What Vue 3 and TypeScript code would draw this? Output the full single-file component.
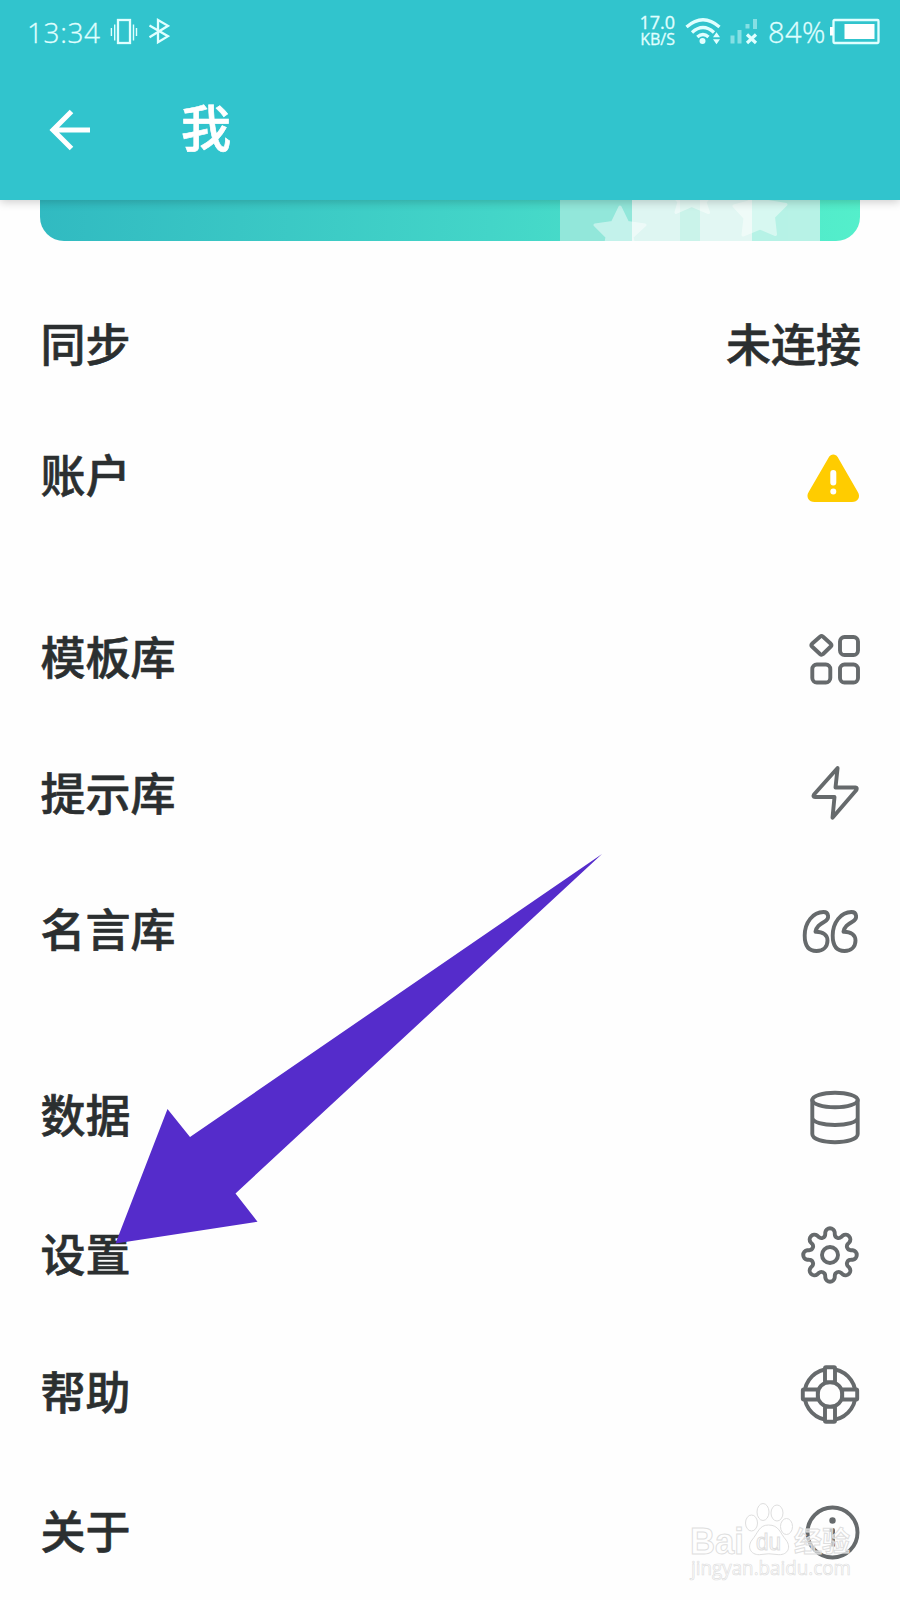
<script setup lang="ts">
type IconName = 'warning' | 'templates' | 'bolt' | 'quote' | 'database' | 'gear' | 'help' | 'info'

interface Item {
  label: string
  icon?: IconName
  value?: string
}

const groups: { id: string; items: Item[] }[] = [
  { id: 'account', items: [{ label: '同步', value: '未连接' }, { label: '账户', icon: 'warning' }] },
  {
    id: 'library',
    items: [
      { label: '模板库', icon: 'templates' },
      { label: '提示库', icon: 'bolt' },
      { label: '名言库', icon: 'quote' },
    ],
  },
  {
    id: 'system',
    items: [
      { label: '数据', icon: 'database' },
      { label: '设置', icon: 'gear' },
      { label: '帮助', icon: 'help' },
      { label: '关于', icon: 'info' },
    ],
  },
]

// Eight-toothed outline: rounded teeth alternating with rounded valleys.
const gearPath = (() => {
  const cx = 50
  const cy = 51
  const pt = (r: number, deg: number) => {
    const a = (deg * Math.PI) / 180
    return `${(cx + r * Math.cos(a)).toFixed(2)} ${(cy + r * Math.sin(a)).toFixed(2)}`
  }
  let d = ''
  for (let i = 0; i < 8; i++) {
    const a = i * 45 - 90
    d += `${i ? 'L' : 'M'}${pt(21.3, a - 13)}`
    d += `L${pt(23.2, a - 11.7)}A4.750 4.750 0 0 1 ${pt(23.2, a + 11.7)}`
    d += `L${pt(21.3, a + 13)}A3.800 3.800 0 0 0 ${pt(21.3, a + 32)}`
  }
  return d + 'Z'
})()
</script>

<template>
  <main class="screen">
    <header class="header">
      <div class="status">
        <div class="status-left">
          <span class="clock">13:34</span>
          <svg class="vibrate" width="28" height="28" viewBox="0 0 28 28">
            <rect x="8" y="3" width="12" height="23" />
            <path d="M4.7 7.5v16M1.4 11v8M23.500 7.500v16M26.500 11v8" class="thin" />
          </svg>
          <svg class="bluetooth" width="22" height="28" viewBox="0 0 22 28">
            <path d="M1.5 8.5 20 19.2 10 25.2V3L20 8.8 1.5 20.2" />
          </svg>
        </div>
        <div class="status-right">
          <div class="speed"><span>17.0</span><span class="unit">KB/S</span></div>
          <svg class="wifi" width="36" height="28" viewBox="0 0 36 28">
            <path d="M1.5 10Q18 -4.5 34.5 10M7 15.500Q18 5.500 29 15.500M12.300 20Q18 15 23.500 20" />
            <circle cx="17.500" cy="24" r="3" />
            <path class="solid" d="M28 20.200 31.500 15.200 35 20.200ZM28 22.200H35L31.500 27.200Z" />
          </svg>
          <svg class="signal" width="28" height="28" viewBox="0 0 28 28">
            <path class="faint" d="M2.500 18.500v8M9.500 13v13.500M17.500 7v4.500M25 2v10" />
            <path class="cross" d="M17 17.500 26 26M26 17.500 17 26" />
          </svg>
          <span class="percent">84%</span>
          <svg class="battery" width="51" height="28" viewBox="0 0 51 28">
            <rect class="shell" x="4.500" y="3" width="45" height="23" rx="1" />
            <rect class="fill" x="15.500" y="7" width="30" height="15" />
            <rect class="fill" x="1" y="10" width="3" height="8.500" />
          </svg>
        </div>
      </div>
      <div class="appbar">
        <svg class="back" width="44" height="44" viewBox="0 0 44 44">
          <path d="M23.500 3.500 5 22 23.500 40.500M5 22H42" />
        </svg>
        <h1>我</h1>
      </div>
    </header>

    <div class="banner">
      <svg width="260" height="41" viewBox="560 200 260 41">
        <rect x="560" y="200" width="72" height="41" fill="#92e7da" />
        <rect x="632" y="200" width="48" height="41" fill="#def6f2" />
        <rect x="680" y="200" width="20" height="41" fill="#cbf3ea" />
        <rect x="700" y="200" width="52" height="41" fill="#e2f7f3" />
        <rect x="752" y="200" width="68" height="41" fill="#b7f2e6" />
        <g class="stars">
          <path d="M620 207 627.500 222.500 645 225 632 237 636 254 620 245 604 254 607 237 595 225 612.500 222.500Z" />
          <path d="M692 176 698 190 714 192 705 202 708.500 212.500 692 205.500 676 212.500 679 202 670 192 686 190Z" />
          <path d="M752 184 765 201 786 204.500 773.500 217 775.500 234.500 760 228 743 235 745 218 734 206 749 202Z" />
        </g>
      </svg>
    </div>

    <section v-for="group in groups" :key="group.id" class="group" :class="group.id">
      <div v-for="item in group.items" :key="item.label" class="row">
        <span class="label">{{ item.label }}</span>
        <span v-if="item.value" class="value">{{ item.value }}</span>
        <svg v-else class="icon" width="100" height="100" viewBox="0 0 100 100">
          <g v-if="item.icon === 'warning'">
            <path class="alert" d="M53.300 34.500 33 69.500Q31.500 72 34.500 72H72Q75 72 73.500 69.500Z" />
            <path class="mark" d="M53.300 48V57.500M53.300 66.500v.1" />
          </g>
          <g v-else-if="item.icon === 'templates'">
            <path d="M43.100 30.700 50.800 37.800Q52.200 39.200 50.800 40.500L43.100 48Q41.500 49.300 40 48L32 40.500Q30.600 39.200 32 37.800L40 30.700Q41.500 29.500 43.100 30.700Z" />
            <rect x="60" y="31" width="18" height="18" rx="4.500" />
            <rect x="32.300" y="58.500" width="18" height="18" rx="4.500" />
            <rect x="60" y="58.500" width="18" height="18" rx="4.500" />
          </g>
          <g v-else-if="item.icon === 'bolt'">
            <path d="M57.600 26 34 52.500Q32.500 55 35 55H54.500L52.500 75.700 76.400 48Q77.500 45.500 75.500 45.500H55.500Z" />
          </g>
          <g v-else-if="item.icon === 'quote'">
            <path d="M43.500 34C33 34 24.700 44.500 24.700 57.500C24.700 68 29 73 36.500 73C43 73 47.500 69 47.500 62.500C47.500 57 43 53.500 35.500 53.700C36.500 48.500 39.500 46.500 44 44C50.500 40.500 48.500 34 43.500 34Z" />
            <path d="M71.500 34C61 34 52.700 44.500 52.700 57.500C52.700 68 57 73 64.500 73C71 73 75.500 69 75.500 62.500C75.500 57 71 53.500 63.500 53.700C64.500 48.500 67.500 46.500 72 44C78.500 40.500 76.500 34 71.500 34Z" />
          </g>
          <g v-else-if="item.icon === 'database'">
            <ellipse cx="55" cy="35" rx="22.700" ry="7.300" />
            <path d="M32.300 35V69C32.300 80 77.700 80 77.700 69V35M32.300 52.500C32.300 62.500 77.700 62.500 77.700 52.500" />
          </g>
          <g v-else-if="item.icon === 'gear'">
            <path :d="gearPath" />
            <circle cx="50" cy="51" r="8" />
          </g>
          <g v-else-if="item.icon === 'help'">
            <circle cx="50" cy="52.500" r="25.500" />
            <circle cx="50" cy="52.500" r="12.500" />
            <g class="strap">
              <rect x="45" y="25.300" width="10" height="15" rx="1" />
              <rect x="45" y="64.700" width="10" height="15" rx="1" />
              <rect x="22.800" y="47.500" width="15" height="10" rx="1" />
              <rect x="62.200" y="47.500" width="15" height="10" rx="1" />
            </g>
          </g>
          <g v-else>
            <circle cx="52.500" cy="51.500" r="25" />
            <path class="stem" d="M49.500 49H53V65.500" />
            <circle class="dot" cx="52.500" cy="39.500" r="3.200" />
          </g>
        </svg>
      </div>
    </section>

    <svg class="pointer" width="900" height="1600" viewBox="0 0 900 1600">
      <path d="M115.500 1243.500 167.500 1109 190 1137 602 854 235.500 1193.500 257.500 1221.800Z" />
    </svg>

    <svg class="watermark" width="190" height="100" viewBox="680 1490 190 100">
      <g class="brand">
        <text x="690" y="1553.500" font-size="36" textLength="54" lengthAdjust="spacingAndGlyphs">Bai</text>
        <ellipse cx="751.500" cy="1523" rx="6" ry="8" />
        <ellipse cx="763" cy="1512" rx="6" ry="8.500" />
        <ellipse cx="777" cy="1513" rx="6" ry="8" />
        <ellipse cx="786.500" cy="1526.500" rx="6" ry="8" />
        <path d="M768.500 1525C759 1525 758 1533 752 1540C746 1548 752 1556 761 1554.500Q768.500 1553 777 1554.500C787 1556 792 1548 786 1540C780 1533 779 1525 768.500 1525Z" />
        <text class="du" x="756" y="1550" font-size="24" textLength="25" lengthAdjust="spacingAndGlyphs">du</text>
        <text class="cjk" x="794" y="1552" font-size="28">经验</text>
        <text class="url" x="691" y="1575" font-size="20" textLength="160" lengthAdjust="spacingAndGlyphs">jingyan.baidu.com</text>
      </g>
    </svg>
  </main>
</template>

<style>
body {
  margin: 0;
  background: #fefefe;
}
</style>

<style scoped>
.screen {
  position: relative;
  width: 900px;
  height: 1600px;
  overflow: hidden;
  background: #fefefe;
  color: #2b2f30;
  font-family: "Noto Sans CJK SC", sans-serif;
}

.header {
  position: relative;
  z-index: 1;
  height: 200px;
  background: #31c4cd;
  box-shadow: 0 2px 9px rgba(0, 0, 0, 0.2);
  color: #e0ffff;
}

.status,
.status-left,
.status-right {
  display: flex;
  align-items: center;
}

.status {
  height: 62px;
  padding: 0 20px 0 27px;
  justify-content: space-between;
  font-family: "Open Sans", sans-serif;
}

.clock,
.percent {
  font-size: 28px;
  line-height: 40px;
  font-weight: 350;
  -webkit-text-stroke: 0.3px #e0ffff;
  white-space: nowrap;
}

.clock {
  width: 83px;
  padding-top: 2px;
  letter-spacing: 0.6px;
}

.percent {
  padding-top: 2px;
  margin-left: 10px;
  width: 61px;
  font-size: 29px;
  letter-spacing: 0.4px;
}

.bluetooth {
  margin-left: 10px;
}

.status svg {
  display: block;
  fill: none;
  stroke: #e0ffff;
  stroke-width: 2.300;
}

.status svg .thin {
  stroke-width: 1.4;
}

.speed {
  display: flex;
  flex-direction: column;
  align-items: flex-end;
  margin-right: 10px;
  font-size: 18px;
  line-height: 17px;
  font-weight: 500;
  -webkit-text-stroke: 0.3px #e0ffff;
}

.speed .unit {
  font-size: 16px;
}

.status .wifi {
  stroke-width: 3.300;
}

.status .wifi circle,
.status .wifi .solid {
  fill: #e0ffff;
  stroke: none;
}

.signal {
  margin-left: 9px;
}

.status .signal .faint {
  stroke: #85dfe4;
  stroke-width: 4;
}

.status .signal .cross {
  stroke-width: 3.200;
}

.status .battery .fill {
  fill: #fff;
  stroke: none;
}

.appbar {
  display: flex;
  align-items: center;
  height: 136px;
  padding-left: 48px;
}

.back {
  fill: none;
  stroke: #fff;
  stroke-width: 5;
}

.appbar h1 {
  margin: 0 0 10px 89px;
  font-size: 50px;
  line-height: 60px;
  font-weight: 500;
  -webkit-text-stroke: 0.7px #fff;
  color: #fff;
}

.banner {
  display: flex;
  justify-content: flex-end;
  height: 41px;
  margin: 0 40px;
  padding-right: 40px;
  box-sizing: border-box;
  overflow: hidden;
  border-radius: 0 0 24px 24px;
  background: linear-gradient(95deg, #31bac1, #43d5c8 55%, #54efcb);
}

.banner .stars path {
  fill: #fff;
  stroke: #fff;
  stroke-width: 3;
  stroke-linejoin: round;
}

.banner .stars {
  opacity: 0.45;
}

.group {
  display: grid;
  grid-auto-rows: 130px;
  padding: 0 20px 0 40px;
}

.account {
  margin-top: 38px;
  row-gap: 1px;
}

.library {
  margin-top: 51px;
  row-gap: 6px;
}

.system {
  margin-top: 57px;
  row-gap: 8.600px;
}

.row {
  display: flex;
  align-items: center;
  justify-content: space-between;
}

.label,
.value {
  padding-bottom: 1.400px;
  font-size: 45px;
  line-height: 60px;
  font-weight: 500;
  -webkit-text-stroke: 0.6px #2b2f30;
}

.library .label {
  padding-bottom: 0.600px;
}

.label {
  margin-left: 0.500px;
}

.value {
  margin-right: 19px;
}

.icon {
  fill: none;
  stroke: #666a6c;
  stroke-width: 3.900;
  stroke-linejoin: round;
  stroke-linecap: round;
}

.icon .alert {
  fill: #fc0;
  stroke: #fc0;
  stroke-width: 10;
}

.icon .mark {
  stroke: #fff;
  stroke-width: 6;
}

.icon .strap rect {
  fill: #fefefe;
}

.icon .stem {
  stroke-linecap: butt;
}

.icon .dot {
  fill: #666a6c;
  stroke: none;
}

.pointer {
  position: absolute;
  left: 0;
  top: 0;
  fill: #552ccb;
  pointer-events: none;
}

.watermark {
  position: absolute;
  left: 680px;
  top: 1490px;
  pointer-events: none;
}

.brand {
  fill: #fff;
  fill-opacity: 0.6;
  stroke: #dedede;
  stroke-width: 1;
  font-family: "Liberation Sans", sans-serif;
  font-weight: 700;
}

.brand .du {
  font-weight: 400;
}

.brand .cjk {
  font-family: "Noto Sans CJK SC", sans-serif;
}

.brand .url {
  font-family: "Open Sans", sans-serif;
  font-weight: 400;
  stroke-width: 0.700;
}
</style>
